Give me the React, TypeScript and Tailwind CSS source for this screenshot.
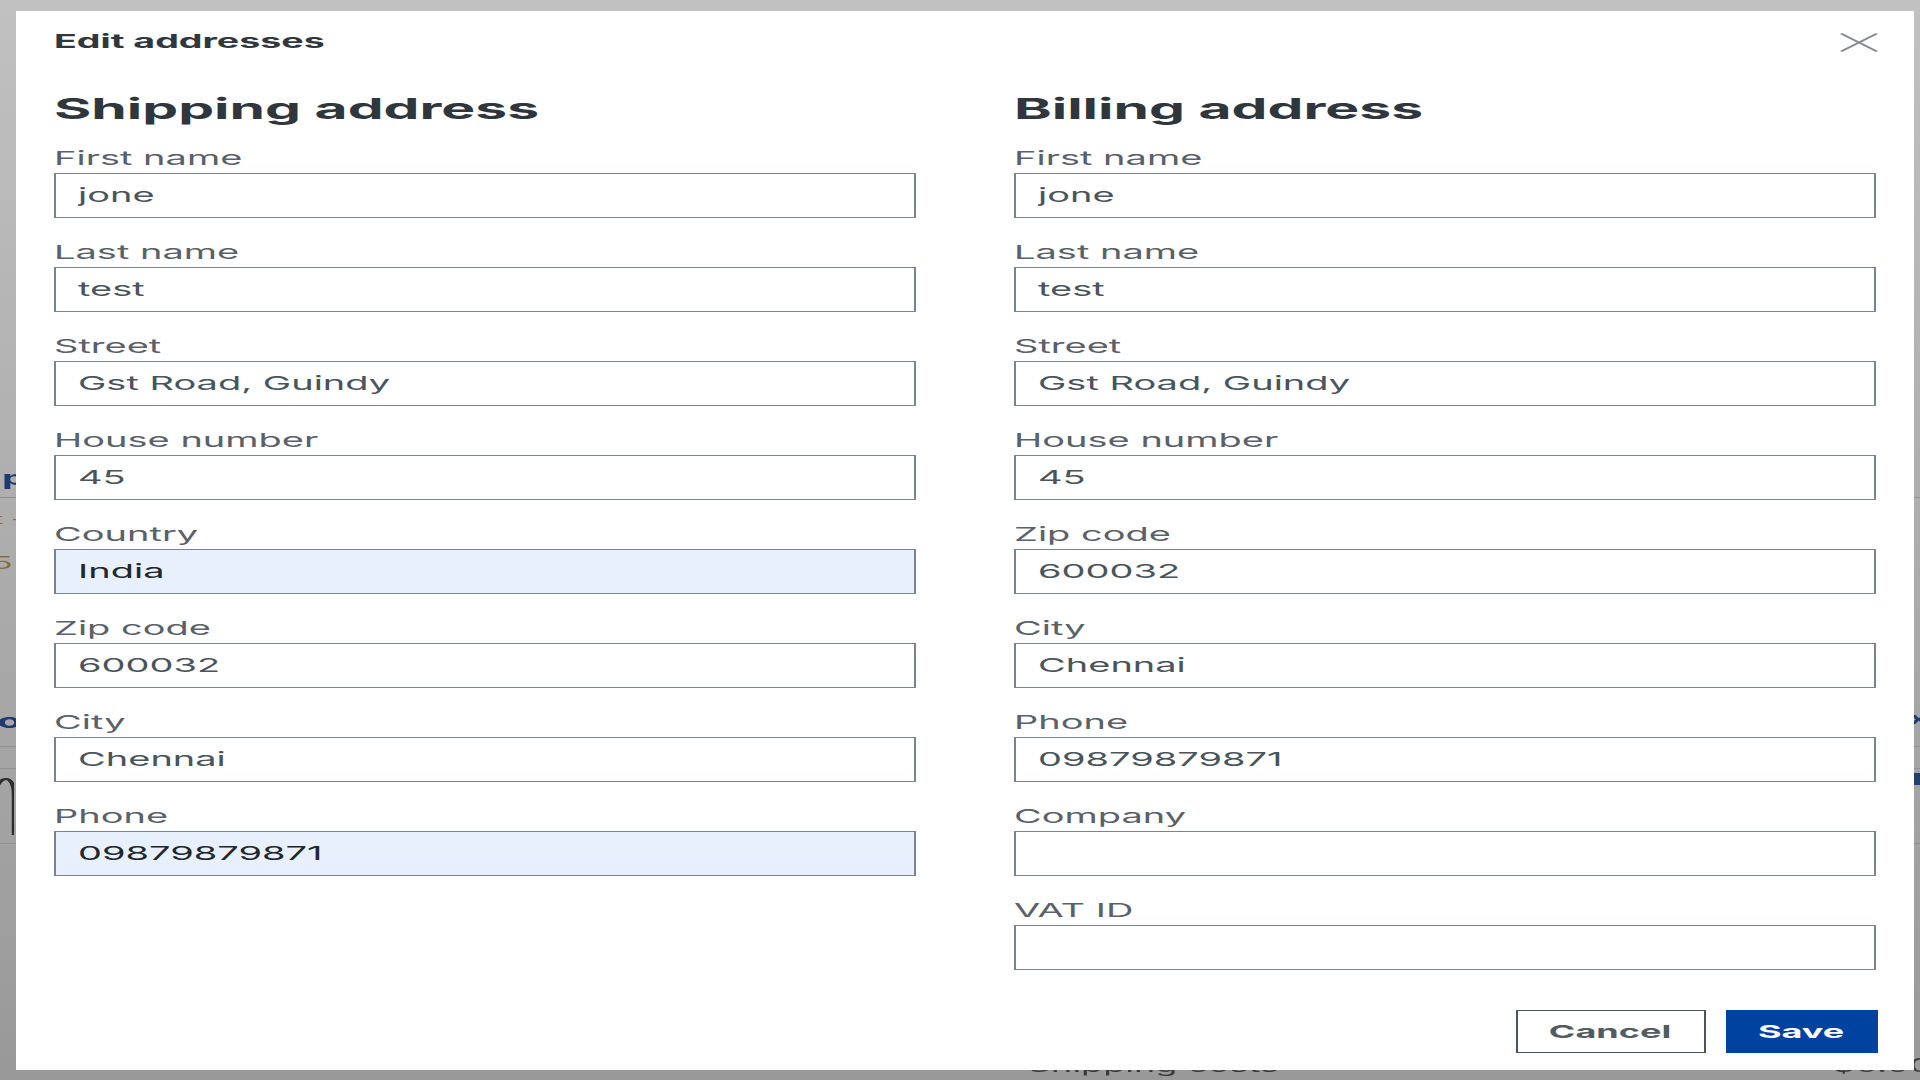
import React from "react";

type Field = { label: string; value: string; autofill?: boolean };

const shippingFields: Field[] = [
  { label: "First name", value: "jone" },
  { label: "Last name", value: "test" },
  { label: "Street", value: "Gst Road, Guindy" },
  { label: "House number", value: "45" },
  { label: "Country", value: "India", autofill: true },
  { label: "Zip code", value: "600032" },
  { label: "City", value: "Chennai" },
  { label: "Phone", value: "09879879871", autofill: true },
];

const billingFields: Field[] = [
  { label: "First name", value: "jone" },
  { label: "Last name", value: "test" },
  { label: "Street", value: "Gst Road, Guindy" },
  { label: "House number", value: "45" },
  { label: "Zip code", value: "600032" },
  { label: "City", value: "Chennai" },
  { label: "Phone", value: "09879879871" },
  { label: "Company", value: "" },
  { label: "VAT ID", value: "" },
];

function FormField({ label, value, autofill }: Field) {
  return (
    <label className="flex flex-col">
      <span className="mb-[4px] text-[19px] leading-[21px] text-[#5a6168]">{label}</span>
      <input
        readOnly
        value={value}
        className={
          autofill
            ? "h-[45px] w-full border border-[#798490] bg-[#e8f0fe] pl-[11px] pr-[12px] text-[19px] text-[#22272c] outline-none"
            : "h-[45px] w-full border border-[#798490] bg-white pl-[11px] pr-[12px] text-[19px] text-[#4a545b] outline-none"
        }
      />
    </label>
  );
}

function AddressColumn({ title, fields }: { title: string; fields: Field[] }) {
  return (
    <section className="flex flex-col">
      <h2 className="mb-[22px] text-[28.5px] font-bold leading-[34px] text-[#2f363c]">{title}</h2>
      <div className="flex flex-col gap-[24px]">
        {fields.map((f) => (
          <FormField key={f.label} {...f} />
        ))}
      </div>
    </section>
  );
}

function CloseIcon() {
  return (
    <svg width="19" height="19" viewBox="0 0 19 19" fill="none">
      <path d="M1 1L18 18M18 1L1 18" stroke="#86898d" strokeWidth="1.6" strokeLinecap="round" />
    </svg>
  );
}

// Storefront page that sits under the dimmed overlay
function BackgroundPage() {
  return (
    <div className="flex h-full flex-col pt-[458px]">
      <div className="flex h-[40px] items-center border-b border-[#8f9296]">
        <span className="-ml-[30px] text-[20px] font-bold text-[#1f3a6e]">Shippi</span>
      </div>
      <div className="flex h-[40px] items-center">
        <span className="-ml-[3px] text-[14px] text-[#9a6a3a]">t -</span>
      </div>
      <div className="flex h-[40px] items-center pt-[12px]">
        <span className="-ml-[4px] text-[17px] text-[#8a6a40]">5</span>
      </div>
      <div className="flex h-[168px] items-end pb-[10px]">
        <span className="-ml-[22px] text-[20px] font-bold text-[#1f3a6e]">Prod</span>
        <span className="ml-auto mb-[6px] -mr-[4px] text-[16px] font-bold text-[#1f3a6e]">x</span>
      </div>
      <div className="h-[22px] border-t border-[#8f9296]" />
      <div className="flex h-[75px] items-start border-t border-[#8f9296]">
        <svg width="10" height="62" viewBox="0 0 10 62" className="-ml-[3px] mt-[8px]">
          <path d="M1 60V18C1 6 4 2 6 2S10 6 10 18V58" stroke="#2b2b2b" strokeWidth="2.2" fill="none" />
        </svg>
        <div className="ml-auto mt-[4px] h-[12px] w-[6px] bg-[#20406f]" />
      </div>
      <div className="border-t border-[#8f9296]" />
      <div className="flex-1" />
      <div className="flex h-[30px] items-start">
        <span className="ml-[514px] mt-[2px] text-[18px] text-[#3a3a3a]">Shipping costs</span>
        <span className="ml-auto -mr-[6px] mt-[2px] text-[18px] text-[#3a3a3a]">$0.00</span>
      </div>
    </div>
  );
}

export default function App() {
  return (
    <div className="h-[1080px] w-[1920px] overflow-hidden font-[Inter,sans-serif]">
      <div className="relative h-[1080px] w-[960px] origin-top-left scale-x-200 bg-gradient-to-b from-[#c1c1c1] to-[#999999]">
        <BackgroundPage />
        <div className="absolute left-[8px] top-[11px] flex h-[1059px] w-[948.5px] flex-col bg-white pl-[19px] pr-[18px] pt-[20px]">
          <div className="flex h-[22px] items-center justify-between">
            <h1 className="text-[18.8px] font-bold leading-[22px] text-[#30373d]">Edit addresses</h1>
            <button type="button" className="mt-[1px] flex items-center justify-center" aria-label="Close">
              <CloseIcon />
            </button>
          </div>
          <div className="mt-[38.5px] grid grid-cols-[431px_431px] gap-x-[49px]">
            <AddressColumn title="Shipping address" fields={shippingFields} />
            <AddressColumn title="Billing address" fields={billingFields} />
          </div>
          <div className="mt-[40px] flex justify-end gap-[10px]">
            <button
              type="button"
              className="flex h-[43px] w-[95px] items-center justify-center border border-[#4a545b] bg-white text-[18px] font-bold text-[#535b62]"
            >
              Cancel
            </button>
            <button
              type="button"
              className="flex h-[43px] w-[76px] items-center justify-center bg-[#0042a0] text-[18px] font-bold text-white"
            >
              Save
            </button>
          </div>
        </div>
      </div>
    </div>
  );
}
